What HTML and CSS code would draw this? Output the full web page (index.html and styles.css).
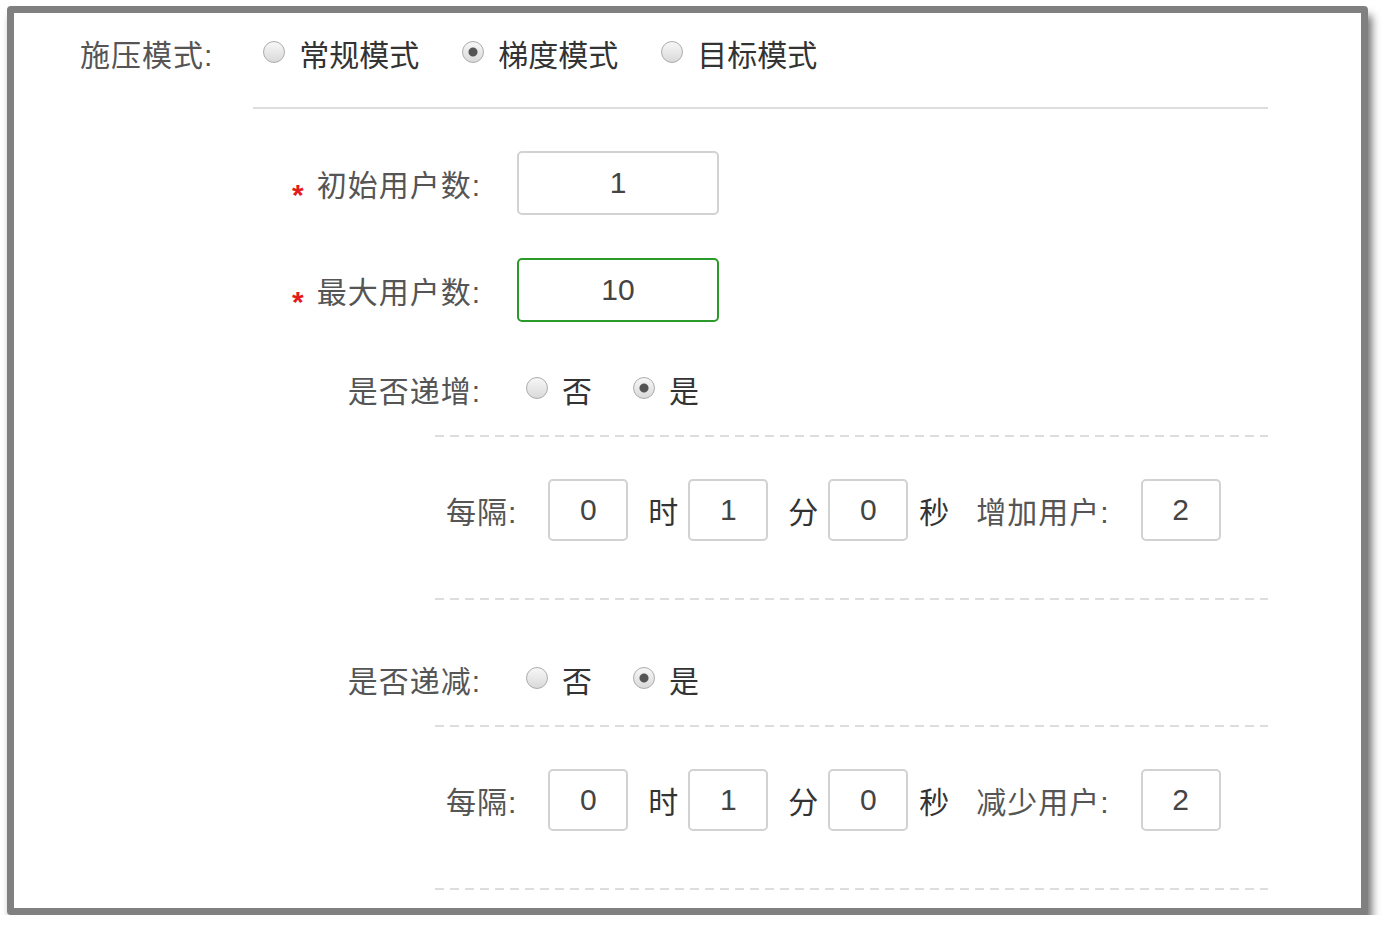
FILE: index.html
```html
<!DOCTYPE html>
<html lang="zh-CN">
  <head>
    <meta charset="UTF-8" />
    <meta name="viewport" content="width=device-width, initial-scale=1.0" />
    <title>施压模式</title>
    <link rel="stylesheet" href="styles.css">
  </head>
  <body>
    <div class="panel">
      <div class="mode-row">
        <span class="mode-label">施压模式:</span>
        <label class="opt first"><input type="radio" name="mode" /><span>常规模式</span></label>
        <label class="opt"><input type="radio" name="mode" checked /><span>梯度模式</span></label>
        <label class="opt"><input type="radio" name="mode" /><span>目标模式</span></label>
      </div>
      <div class="rule"></div>

      <div class="field first-field">
        <label class="field-label" for="startUsers"><span class="req">*</span>初始用户数:</label>
        <input type="text" class="num wide" id="startUsers" value="1" />
      </div>
      <div class="field">
        <label class="field-label" for="maxUsers"><span class="req">*</span>最大用户数:</label>
        <input type="text" class="num wide active" id="maxUsers" value="10" />
      </div>

      <div class="field radio-field">
        <span class="field-label">是否递增:</span>
        <label class="opt first"><input type="radio" name="inc" /><span>否</span></label>
        <label class="opt"><input type="radio" name="inc" checked /><span>是</span></label>
      </div>
      <div class="step">
        <div class="dash top"></div>
        <div class="interval">
          <span class="int-label">每隔:</span>
          <input type="text" class="num small" value="0" />
          <span class="unit">时</span>
          <input type="text" class="num small" value="1" />
          <span class="unit">分</span>
          <input type="text" class="num small" value="0" />
          <span class="unit tight">秒</span>
          <span class="int-label users">增加用户:</span>
          <input type="text" class="num small" value="2" />
        </div>
        <div class="dash bottom"></div>
      </div>

      <div class="field radio-field second">
        <span class="field-label">是否递减:</span>
        <label class="opt first"><input type="radio" name="dec" /><span>否</span></label>
        <label class="opt"><input type="radio" name="dec" checked /><span>是</span></label>
      </div>
      <div class="step">
        <div class="dash top"></div>
        <div class="interval">
          <span class="int-label">每隔:</span>
          <input type="text" class="num small" value="0" />
          <span class="unit">时</span>
          <input type="text" class="num small" value="1" />
          <span class="unit">分</span>
          <input type="text" class="num small" value="0" />
          <span class="unit tight">秒</span>
          <span class="int-label users">减少用户:</span>
          <input type="text" class="num small" value="2" />
        </div>
        <div class="dash bottom"></div>
      </div>
    </div>
  </body>
</html>
```

FILE: styles.css
```css
body {
  margin: 0;
  background: #fff;
  font-family: "Liberation Sans", "Noto Sans CJK SC", sans-serif;
  font-size: 30px;
  color: #333;
}
.panel {
  box-sizing: border-box;
  width: 1361px;
  height: 909px;
  margin: 6px 0 0 7px;
  border: 7px solid #808080;
  border-radius: 4px;
  background: #fff;
  box-shadow: 4px 9px 9px rgba(0, 0, 0, 0.55);
}
.mode-row {
  display: flex;
  align-items: center;
  height: 80px;
  padding-left: 66px;
}
.mode-label,
.field-label,
.int-label {
  color: #555;
  white-space: nowrap;
  letter-spacing: 1px;
}
.opt {
  display: flex;
  align-items: center;
  margin-left: 43px;
  color: #333;
  cursor: pointer;
}
.opt.first {
  margin-left: 50px;
}
.opt span {
  margin-left: 14px;
}
.opt input {
  appearance: none;
  -webkit-appearance: none;
  width: 22px;
  height: 22px;
  margin: -3px 0 0 0;
  border: 1px solid #acacac;
  border-radius: 50%;
  box-sizing: border-box;
  background: linear-gradient(#f7f7f7, #d9d9d9);
}
.opt input:checked {
  background: radial-gradient(circle, #555 0, #555 4px, transparent 5px),
    linear-gradient(#f7f7f7, #d9d9d9);
}
.rule {
  width: 1015px;
  height: 2px;
  margin: 14px 0 0 239px;
  background: #ddd;
}
.field {
  display: flex;
  align-items: center;
  height: 64px;
  margin-top: 43px;
}
.field.first-field {
  margin-top: 42px;
}
.field.radio-field {
  margin-top: 35px;
}
.field.radio-field.second {
  margin-top: 47px;
}
.field-label {
  display: flex;
  align-items: center;
  justify-content: flex-end;
  width: 467px;
}
.radio-field .opt {
  margin-left: 41px;
}
.radio-field .opt.first {
  margin-left: 45px;
}
.req {
  color: #e31b1b;
  font-size: 30px;
  font-weight: bold;
  line-height: 1;
  margin: 24px 12px 0 0;
}
.num {
  box-sizing: border-box;
  height: 64px;
  padding: 0;
  border: 2px solid #d2d2d2;
  border-radius: 5px;
  background: #fff;
  font-family: "Liberation Sans", sans-serif;
  font-size: 30px;
  color: #444;
  text-align: center;
  outline: none;
}
.num.wide {
  width: 202px;
  margin-left: 36px;
}
.num.active {
  border-color: #2a9a2a;
}
.step {
  width: 833px;
  margin-left: 421px;
}
.dash {
  height: 2px;
  background: repeating-linear-gradient(90deg, #ddd 0, #ddd 9px, transparent 9px, transparent 15px);
}
.dash.top {
  margin-top: 14px;
}
.dash.bottom {
  margin-top: 57px;
}
.interval {
  display: flex;
  align-items: center;
  height: 62px;
  margin-top: 42px;
  padding-left: 11px;
}
.num.small {
  width: 80px;
  height: 62px;
  margin-left: 31px;
}
.unit {
  margin: 0 10px 0 20px;
  color: #333;
}
.unit + .num.small {
  margin-left: 0;
}
.unit.tight {
  margin-left: 11px;
}
.int-label.users {
  margin-left: 17px;
}
```
